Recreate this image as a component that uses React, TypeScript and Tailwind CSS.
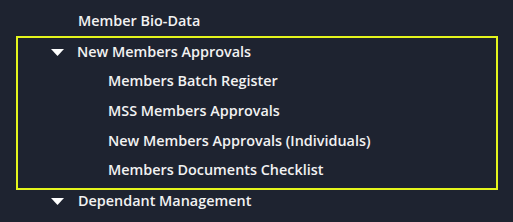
import React from 'react';

const Caret = () => (
  <svg width="13" height="7" viewBox="0 0 13 7" className="shrink-0">
    <path d="M0 0 H13 L6.5 7 Z" fill="#ffffff" />
  </svg>
);

const subItems = [
  'Members Batch Register',
  'MSS Members Approvals',
  'New Members Approvals (Individuals)',
  'Members Documents Checklist',
];

export default function App() {
  return (
    <div
      className="w-[513px] h-[222px] bg-[#1e2330] text-[#f2f2f2] text-[14.4px] font-semibold overflow-hidden"
      style={{ fontFamily: '"Open Sans", "Liberation Sans", sans-serif' }}
    >
      <div className="pt-[6px]">
        {/* Top-level item */}
        <div className="h-[30px] flex items-center pl-[78px]">Member Bio-Data</div>

        {/* Highlighted group */}
        <div className="ml-[16px] w-[482px] border-2 border-[#e4f51c] pb-[3px]">
          <div className="h-[28px] flex items-center pl-[33px] gap-[13px]">
            <Caret />
            <span>New Members Approvals</span>
          </div>
          {subItems.map((s) => (
            <div key={s} className="h-[29.75px] flex items-center pl-[90px]">
              {s}
            </div>
          ))}
        </div>

        <div className="h-[22px] flex items-center pl-[51px] gap-[14px]">
          <Caret />
          <span>Dependant Management</span>
        </div>
      </div>
    </div>
  );
}
